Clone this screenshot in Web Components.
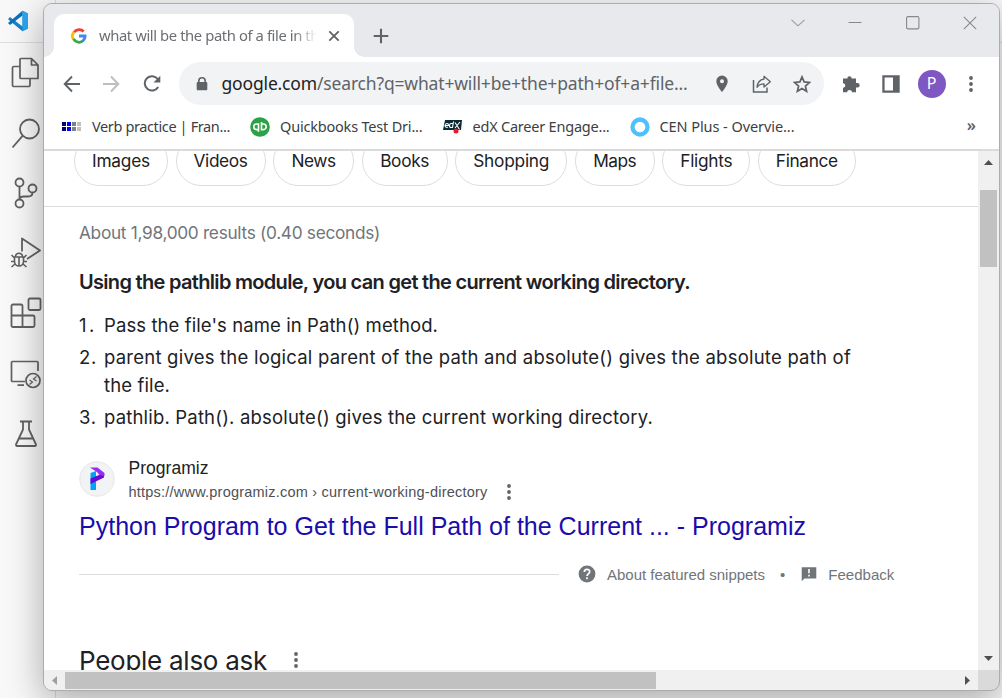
<!DOCTYPE html>
<html lang="en"><head><meta charset="utf-8"><title>Search</title>
<style>html,body{margin:0;height:100%;overflow:hidden;background:#f8f8f8}</style></head>
<body><desktop-scene></desktop-scene>
<script>
const ICONS={
vscode:[22,22,`<path d="M15.5 0.8L21 3.4v15.2l-5.500 2.600L1 9.200 3 7l12.500 9.500z" fill="#1683c7"/><path d="M1 13l2 2L15.500 5.500V.8L1 13z" fill="#0b70b7"/><path d="M15.500.8L21 3.400v15.200l-5.500 2.600z" fill="#2ba5ee"/>`],
files:[30,32,`<g fill="none" stroke="#616161" stroke-width="1.700" stroke-linejoin="round"><path d="M10 1.500h10.500L27 8v13.500H10a1 1 0 0 1-1-1v-18a1 1 0 0 1 1-1zM20.500 1.500V8H27M9 9.500H3a1.500 1.500 0 0 0-1.500 1.500v17A1.500 1.500 0 0 0 3 29.500h14.500A1.500 1.500 0 0 0 19 28v-6.500"/></g>`],
search:[30,32,`<g fill="none" stroke="#616161" stroke-width="1.800"><circle cx="18.500" cy="12" r="9.500"/><path d="M11.800 18.700L1.500 30.500"/></g>`],
git:[26,32,`<g fill="none" stroke="#616161" stroke-width="1.800"><circle cx="6.500" cy="5.500" r="4"/><circle cx="6.500" cy="26.500" r="4"/><circle cx="19.500" cy="11.500" r="4"/><path d="M6.500 9.500v13M19.500 15.500c0 3-2 4-4.500 4h-4c-3 0-4.500 1-4.500 3"/></g>`],
debug:[32,32,`<g fill="none" stroke="#616161" stroke-width="1.800"><path d="M12 14.500V1.500l18 12-13 8.500" stroke-linejoin="round"/><path d="M4.500 20h9v4.500a4.500 4.500 0 0 1-9 0zM5.500 20c0-5 7-5 7 0M9 20v9M4.500 24.500H1M4.500 21L1.500 18M5 27l-3.500 3M13.500 24.500H17M13.500 21l3-3M13 27l3.500 3" stroke-width="1.600"/></g>`],
ext:[32,32,`<g fill="none" stroke="#616161" stroke-width="1.800"><rect x="18.500" y="1.500" width="12" height="11.500" rx="1.500"/><path d="M3 7.500h8A1.500 1.500 0 0 1 12.500 9v9.500H23a1.500 1.500 0 0 1 1.500 1.500v8.500A1.500 1.500 0 0 1 23 30H3a1.500 1.500 0 0 1-1.500-1.500V9A1.500 1.500 0 0 1 3 7.500zM1.500 18.500h11V30"/></g>`],
remote:[32,30,`<g fill="none" stroke="#616161" stroke-width="1.700"><path d="M15 22.500H2.500a1 1 0 0 1-1-1V3.500a1 1 0 0 1 1-1H27a1 1 0 0 1 1 1V12M7.500 26.200H14"/><circle cx="23" cy="21.500" r="7"/><path d="M19.500 21l3 2-3 2.500M26.500 17.500l-3 2.500 3 2" stroke-width="1.200"/></g>`],
flask:[26,30,`<g fill="none" stroke="#616161" stroke-width="1.800"><path d="M7 2.500h12M10 2.500v8L3 25.500a1.200 1.200 0 0 0 1 1.500h18a1.200 1.200 0 0 0 1-1.500L16 10.500v-8M6 19.500h14" stroke-linejoin="round"/></g>`],
google:[16,16,`<path d="M3 4.300A6.200 6.200 0 0 1 12.700 3.500" fill="none" stroke="#ea4335" stroke-width="2.700"/><path d="M2.500 11.500A6.300 6.300 0 0 1 3 4" fill="none" stroke="#fbbc05" stroke-width="2.700"/><path d="M2.600 11A6.200 6.200 0 0 0 12.300 12.600" fill="none" stroke="#34a853" stroke-width="2.700"/><path d="M8 6.600h7.400c.5 3-.5 5.500-2.500 7.200l-2.200-1.800c1-.7 1.500-1.500 1.700-2.500H8z" fill="#4285f4"/>`],
x:[12,12,`<path d="M1.300 1.300l9.400 9.400M10.700 1.300L1.300 10.700" stroke="#5f6368" stroke-width="1.800"/>`],
plus:[16,16,`<path d="M8 .7v14.600M.7 8h14.600" stroke="#5f6368" stroke-width="2.100"/>`],
chev:[14,8,`<path d="M.5.8l6.500 6 6.500-6" fill="none" stroke="#999" stroke-width="1.100"/>`],
min:[14,14,`<path d="M.5 6.500h13" stroke="#888" stroke-width="1"/>`],
max:[14,14,`<rect x=".6" y=".6" width="12.300" height="12.300" rx="1.300" fill="none" stroke="#888" stroke-width="1.100"/>`],
close:[14,14,`<path d="M.8.8l12.400 12.400M13.200.8L.8 13.200" stroke="#888" stroke-width="1.100"/>`],
back:[18,18,`<path d="M17 9H2M9 1.500L1.700 9 9 16.500" fill="none" stroke="#5f6368" stroke-width="1.900"/>`],
fwd:[18,18,`<path d="M1 9h15M9 1.500L16.300 9 9 16.500" fill="none" stroke="#bcbec0" stroke-width="1.900"/>`],
reload:[20,18,`<path d="M15.700 4A7.200 7.200 0 1 0 16.200 12" fill="none" stroke="#5f6368" stroke-width="2"/><path d="M18.300.8V7.500h-6.800z" fill="#5f6368"/>`],
lock:[12,14,`<path d="M2.800 6V4a3.200 3.200 0 0 1 6.400 0v2" fill="none" stroke="#5f6368" stroke-width="1.600"/><rect x=".7" y="5" width="10.600" height="8.300" rx="1" fill="#5f6368"/>`],
pin:[12,18,`<path fill-rule="evenodd" d="M6 .5a5.700 5.700 0 0 0-5.700 5.700C.3 10.500 6 17 6 17s5.700-6.500 5.700-10.800A5.700 5.700 0 0 0 6 .5zm0 3.700a2 2 0 1 1 0 4 2 2 0 0 1 0-4z" fill="#5f6368"/>`],
share:[20,18,`<g fill="none" stroke="#5f6368" stroke-width="1.500"><path d="M1.500 5v12h13.500v-4.500"/><path d="M12 4V1.300l6.300 5.400L12 12V8.800c-3.500 0-5.500 1.200-7 3.500.5-5 3-7.700 7-8.300z" stroke-linejoin="round" stroke-width="1.300"/></g>`],
star:[18,18,`<path d="M9 1.900l2.100 5 5.400.5-4.100 3.600 1.200 5.300L9 13.500l-4.600 2.800L5.600 11 1.500 7.400l5.400-.5z" fill="none" stroke="#5f6368" stroke-width="1.700"/>`],
puzzle:[19,18,`<path d="M1 3.500h4.300a2.200 2.200 0 1 1 4.400 0h4.300v4.500h1.500a2.200 2.200 0 1 1 0 4.400H14v4.900h-4c0-3-4.800-3-4.800 0H1v-4.500c3 0 3-4.500 0-4.500z" fill="#5f6368"/>`],
panel:[18,18,`<path fill-rule="evenodd" d="M.3.300h17.400v17.400H.3zM2.600 2.600v12.800h8.400V2.600z" fill="#5f6368"/>`],
dots:[4,16,`<circle cx="2" cy="2" r="1.900" fill="#5f6368"/><circle cx="2" cy="8" r="1.900" fill="#5f6368"/><circle cx="2" cy="14" r="1.900" fill="#5f6368"/>`],
grid:[20,10,`<g><path d="M0 0h4v4H0zM0 5h4v4H0z" fill="#00007c"/><path d="M5 0h4v4H5zM5 5h4v4H5z" fill="#0000f0"/><path d="M10 0h4v4h-4zM10 5h4v4h-4z" fill="#808080"/><path d="M15 0h4v4h-4zM15 5h4v4h-4z" fill="#c0c0c0"/></g>`],
qb:[20,20,`<circle cx="10" cy="10" r="9.800" fill="#2ca147"/><g fill="none" stroke="#fff" stroke-width="1.600"><path d="M8.500 14.800V7H6.600a2.800 2.800 0 0 0 0 5.600H8.500M11.500 5v7.600h1.900a2.800 2.800 0 0 0 0-5.600H11.500"/></g>`],
edx:[20,15,`<path d="M2 1h17l-1 10H0z" fill="#0b2a32"/><g fill="none" stroke="#fff" stroke-width="1.100"><path d="M2 6.500h3.500c0-3-3-2.500-3.500 0 0 2 2 2 3 1.500M10.500 2.500L9.500 8.500H8c-2.500 0-1.500-4 0-4h2M12 3.500l4.500 7M17 3l-5 6" /></g><circle cx="13" cy="12" r="2.500" fill="#f01626"/>`],
ring:[20,20,`<circle cx="10" cy="10" r="7.500" fill="none" stroke="#4fc0fb" stroke-width="4.300"/>`],
prog:[36,36,`<circle cx="18" cy="18" r="17.200" fill="#f1f3f4" stroke="#e4e6e8"/><path d="M11.500 12l5.500-2v19h-5.500z" fill="#00a3f5"/><path d="M11.500 17.500L25 12v4.500L11.500 23z" fill="#6a08dc"/><path d="M11 6.500h7.500l7 5.500v3l-5-1-2.500-3z" fill="#962cf5"/>`],
help:[18,18,`<circle cx="9" cy="9" r="8.400" fill="#70757a"/><path d="M6.300 7c0-3.600 5.400-3.500 5.400-.2 0 1.900-2.700 2-2.700 4.300M9 12.300v1.900" fill="none" stroke="#fff" stroke-width="1.700"/>`],
feed:[16,16,`<path d="M.7 1.200h14.600v11.300H3.500L.7 15.200z" fill="#70757a"/><path d="M8 3v4.300M8 8.800v1.800" stroke="#fff" stroke-width="1.600"/>`],
up:[9,5,`<path d="M0 5L4.500 0 9 5z" fill="#505050"/>`],down:[9,5,`<path d="M0 0l4.500 5L9 0z" fill="#505050"/>`],
left:[5,9,`<path d="M5 0L0 4.500 5 9z" fill="#a0a0a0"/>`],right:[5,9,`<path d="M0 0l5 4.500L0 9z" fill="#505050"/>`]
};
class Base extends HTMLElement{render(css,html){this.attachShadow({mode:'open'}).innerHTML=`<style>*{box-sizing:border-box}${css}</style>${html}`}}
customElements.define('ui-icon',class extends Base{connectedCallback(){
 const [w,h,m]=ICONS[this.getAttribute('name')];
 this.render(`:host{display:block;flex:none;width:${w}px;height:${h}px}svg{display:block}`,`<svg width="${w}" height="${h}" viewBox="0 0 ${w} ${h}">${m}</svg>`)}});
/* A line of text whose tracking is tuned so that it spans a given width. */
customElements.define('fit-text',class extends Base{connectedCallback(){
 this.render(`:host{display:block;flex:none;white-space:pre}span{display:inline-block}`,`<span><slot></slot></span>`);
 const s=this.shadowRoot.querySelector('span'),w=+this.getAttribute('w'),n=this.textContent.length;
 const nat=s.getBoundingClientRect().width;
 s.style.letterSpacing=((w-nat)/n)+'px';this.style.width=w+'px'}});
customElements.define('activity-bar',class extends Base{connectedCallback(){this.render(`
 :host{display:flex;flex-direction:column;width:56px;height:698px;border-right:1px solid #dcdcdc}
 .top{height:43px;padding:10px 0 0 7px}
 nav{display:flex;flex-direction:column}
 nav div{height:60.100px;width:52px;display:flex;align-items:center;justify-content:center}`,
 `<div class="top"><ui-icon name="vscode"></ui-icon></div><nav>${['files','search','git','debug','ext','remote','flask'].map(n=>`<div><ui-icon name="${n}"></ui-icon></div>`).join('')}</nav>`)}});
customElements.define('tab-strip',class extends Base{connectedCallback(){this.render(`
 :host{display:flex;height:53px;background:#e8e9ed;padding:10px 22px 0 10px;font:14.800px "Noto Sans",sans-serif;color:#6b6e72}
 .tab{position:relative;width:300px;height:43px;background:#fff;border-radius:10px 10px 0 0;display:flex;align-items:center;padding-left:17px}
 .tab:before,.tab:after{content:"";position:absolute;bottom:0;width:10px;height:10px}
 .tab:before{left:-10px;background:radial-gradient(circle at 0 0,transparent 9.500px,#fff 10px)}
 .tab:after{right:-10px;background:radial-gradient(circle at 100% 0,transparent 9.500px,#fff 10px)}
 .t{width:218px;margin:-1px 11px 0 12px;-webkit-mask:linear-gradient(90deg,#000 195px,transparent 218px)}
 .plus{margin:14px 0 0 19px}.win{margin:2px 0 0 auto;display:flex;gap:43.500px;height:14px;align-items:center}`,
 `<div class="tab"><ui-icon name="google"></ui-icon><div class="t"><fit-text w="220">what will be the path of a file in th</fit-text></div><ui-icon name="x"></ui-icon></div><ui-icon class="plus" name="plus"></ui-icon>
 <div class="win"><ui-icon name="chev"></ui-icon><ui-icon name="min"></ui-icon><ui-icon name="max"></ui-icon><ui-icon name="close"></ui-icon></div>`)}});
customElements.define('tool-bar',class extends Base{connectedCallback(){this.render(`
 :host{display:flex;height:53px;align-items:center;padding-left:18.500px;background:#fff;font:17.500px "Noto Sans",sans-serif}
 .pill{height:43px;width:645px;border-radius:22px;background:#f1f3f4;display:flex;align-items:center;margin:0 18.500px 0 17px;padding-left:17px;color:#5f6368}
 b{font-weight:400;color:#202124}.r{margin-left:21.500px}.s{margin-left:24px}
 .av{width:28px;height:28px;border-radius:50%;background:#7e57c2;color:#fff;font:16px/27px "Noto Sans",sans-serif;text-align:center;margin:0 23px 0 17.500px}`,
 `<ui-icon name="back"></ui-icon><ui-icon class="r" name="fwd"></ui-icon><ui-icon class="r" name="reload"></ui-icon>
 <div class="pill"><ui-icon name="lock"></ui-icon><fit-text style="margin:-1px 28px 0 14px" w="466"><b>google.com</b>/search?q=what+will+be+the+path+of+a+file...</fit-text><ui-icon name="pin"></ui-icon><ui-icon class="s" name="share"></ui-icon><ui-icon style="margin-left:21px" name="star"></ui-icon></div>
 <ui-icon name="puzzle"></ui-icon><ui-icon style="margin-left:21px" name="panel"></ui-icon><div class="av">P</div><ui-icon name="dots"></ui-icon>`)}});
customElements.define('bookmark-bar',class extends Base{connectedCallback(){
 const l=[['grid',138,'Verb practice | Fran...'],['qb',142.5,'Quickbooks Test Dri...'],['edx',137,'edX Career Engage...'],['ring',135,'CEN Plus - Overvie...']];
 this.render(`:host{display:flex;height:41px;align-items:center;padding:0 23px 6px 18px;border-bottom:2px solid #dadada;background:#fff;font:14.500px "Noto Sans",sans-serif;color:#3c4043}
 .b{display:flex;align-items:center;gap:10px;margin-right:20px}fit-text{margin-top:-2px}.m{margin:-4px 0 0 auto;font-size:16px;font-weight:600;color:#5f6368}`,
 l.map(([i,w,t])=>`<div class="b"><ui-icon name="${i}"></ui-icon><fit-text w="${w}">${t}</fit-text></div>`).join('')+`<span class="m">»</span>`)}});
customElements.define('filter-chips',class extends Base{connectedCallback(){
 const l=[['Images',94,58],['Videos',90,54],['News',81,44],['Books',86,49],['Shopping',112,76],['Maps',80,43],['Flights',88,52],['Finance',98,62]];
 this.render(`:host{display:flex;gap:7.550px;height:56px;padding-left:30px;border-bottom:1px solid #dadce0;color:#202124;font-size:17.300px}
 .c{height:50px;margin-top:-15px;border:1px solid #dadce0;border-radius:25px;display:flex;align-items:center;justify-content:center;line-height:20px;flex:none}`,
 l.map(([t,w,f])=>`<div class="c" style="width:${w}px"><fit-text w="${f}">${t}</fit-text></div>`).join(''))}});
customElements.define('result-page',class extends Base{connectedCallback(){this.render(`
 :host{display:block;width:934px;height:519px;overflow:hidden;background:#fff;font-family:Inter,sans-serif;color:#202124}
 main{padding-left:35px;display:flex;flex-direction:column;font-size:18.500px}
 .about{font-size:17.300px;color:#70757a;height:26px;line-height:26px;margin-top:13px}
 .head{font-size:20px;font-weight:600;height:28px;line-height:28px;margin:22px 0 15px}
 .li{display:grid;grid-template-columns:25px auto;line-height:28px;margin-bottom:4px}
 .src{display:flex;height:48px;margin-top:22px;font-family:"Liberation Sans",sans-serif}
 .src>div{margin-left:13.500px;margin-top:-1px}.n{font-size:17.500px;line-height:24px}.u{font-size:14.500px;line-height:24px;color:#4d5156}
 .title{font:25px/32px "Liberation Sans",sans-serif;color:#1a0dab;margin-top:5px}
 .foot{display:flex;height:20px;align-items:center;margin-top:22px;font:15px "Liberation Sans",sans-serif;color:#70757a}
 .line{width:480px;height:1px;background:#dadce0;margin-right:19px}
 .ask{display:flex;align-items:center;height:36px;margin-top:58px;font-size:26px;gap:27px}`,
 `<filter-chips></filter-chips><main>
 <fit-text class="about" w="301">About 1,98,000 results (0.40 seconds)</fit-text>
 <fit-text class="head" w="611">Using the pathlib module, you can get the current working directory.</fit-text>
 <div class="li"><fit-text w="18">1.</fit-text><fit-text w="334">Pass the file's name in Path() method.</fit-text></div>
 <div class="li"><fit-text w="18">2.</fit-text><div><fit-text w="747">parent gives the logical parent of the path and absolute() gives the absolute path of</fit-text><fit-text w="66">the file.</fit-text></div></div>
 <div class="li"><fit-text w="18">3.</fit-text><fit-text w="549">pathlib. Path(). absolute() gives the current working directory.</fit-text></div>
 <div class="src"><ui-icon name="prog" style="margin-top:4px"></ui-icon><div><fit-text class="n" w="80">Programiz</fit-text><fit-text class="u" w="359">https://www.programiz.com › current-working-directory</fit-text></div><ui-icon name="dots" style="margin:27px 0 0 19px"></ui-icon></div>
 <fit-text class="title" w="727">Python Program to Get the Full Path of the Current ... - Programiz</fit-text>
 <div class="foot"><div class="line"></div><ui-icon name="help"></ui-icon><fit-text w="158" style="margin:0 15px 0 11px">About featured snippets</fit-text><span>•</span><ui-icon name="feed" style="margin:0 11px 0 16px"></ui-icon><fit-text w="66">Feedback</fit-text></div>
 <div class="ask"><fit-text w="188">People also ask</fit-text><ui-icon name="dots"></ui-icon></div>
 </main>`)}});
customElements.define('scroll-bar',class extends Base{connectedCallback(){
 const v=this.hasAttribute('vertical');
 this.render(v?`:host{display:flex;flex-direction:column;align-items:center;width:21px;height:519px;background:#f0f0f0;padding:9px 0 9px}.th{width:17px;height:77px;background:#c1c1c1;margin:25px 0 auto}`
 :`:host{display:flex;align-items:center;width:934px;height:20px;background:#f0f0f0;padding:0 8px}.th{width:591px;height:17px;background:#c1c1c1;margin:0 auto 0 8px}`,
 `<ui-icon name="${v?'up':'left'}"></ui-icon><div class="th"></div><ui-icon name="${v?'down':'right'}"></ui-icon>`)}});
customElements.define('browser-window',class extends Base{connectedCallback(){this.render(`
 :host{display:block;width:957px;height:688px;border:1px solid #acacac;border-radius:9px;overflow:hidden;background:#dadada;box-shadow:0 10px 36px rgba(0,0,0,.32)}
 .v{display:grid;grid-template-columns:934px 21px}`,
 `<tab-strip></tab-strip><tool-bar></tool-bar><bookmark-bar></bookmark-bar><div class="v"><result-page></result-page><scroll-bar vertical></scroll-bar><scroll-bar></scroll-bar></div>`)}});
customElements.define('desktop-scene',class extends Base{connectedCallback(){this.render(`
 :host{display:block;position:relative;width:1002px;height:698px;overflow:hidden;background:linear-gradient(#dedede,#dedede) 0 42px/100% 1px no-repeat,#f8f8f8}
 browser-window{position:absolute;left:43px;top:3px}`,
 `<activity-bar></activity-bar><browser-window></browser-window>`)}});
</script></body></html>
